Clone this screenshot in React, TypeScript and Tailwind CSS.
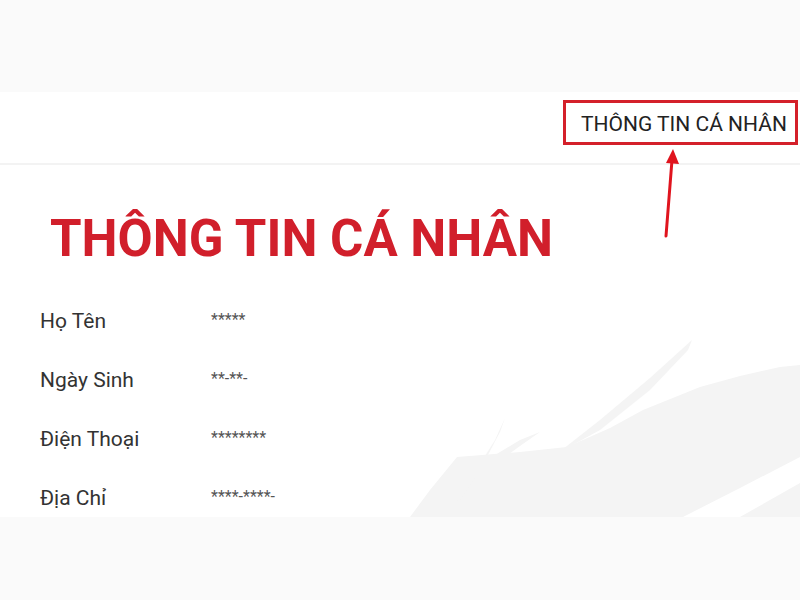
const rows = [
  { label: "Họ Tên", value: "*****" },
  { label: "Ngày Sinh", value: "**-**-" },
  { label: "Điện Thoại", value: "********" },
  { label: "Địa Chỉ", value: "****-****-" },
];

export default function App() {
  return (
    <div className="relative w-[800px] h-[600px] bg-[#fafafa] flex flex-col font-['Roboto',sans-serif]">
      <div className="h-[92px] shrink-0" />

      {/* top nav */}
      <header className="h-[73px] shrink-0 bg-white border-b-2 border-[#f3f3f3] flex justify-end items-start pt-[8px] pr-[2px]">
        <div className="w-[235px] h-[45px] border-[3px] border-[#d4202a] flex items-center pl-[15px] pt-[4px]">
          <span className="text-[21px] leading-none text-[#222]">THÔNG TIN CÁ NHÂN</span>
        </div>
      </header>

      {/* content */}
      <main className="relative h-[352px] shrink-0 bg-white overflow-hidden">
        {/* brush strokes */}
        <svg className="absolute inset-0" width="800" height="352" viewBox="0 165 800 352">
          <path
            d="M410 517 L430 490 L457 457 L520 452 L567 447 L610 428 L643 410 L700 387 L740 376 L780 367 L800 365 L800 457 L740 488 L683 517 Z"
            fill="#f4f4f4"
          />
          <path d="M740 517 L800 483 L800 517 Z" fill="#f4f4f4" />
          <path d="M558 453 L600 420 L650 378 L692 340 L688 350 L650 390 L600 430 Z" fill="#f4f4f4" />
          <path d="M452 503 L470 480 L495 440 L505 418 L500 432 L480 470 L460 500 Z" fill="#f4f4f4" />
          <path d="M440 500 L470 470 L520 440 L540 432 L520 446 L480 475 Z" fill="#f4f4f4" />
        </svg>

        <div className="relative">
          <h1 className="pl-[50px] pt-[48px] text-[51px] leading-none font-bold text-[#d11f2b]">THÔNG TIN CÁ NHÂN</h1>
          <div className="pl-[40px] pt-[45px] flex flex-col gap-[34px]">
            {rows.map((r) => (
              <div key={r.label} className="flex items-center h-[25px]">
                <span className="w-[171px] text-[21px] text-[#333]">{r.label}</span>
                <span className="text-[16px] text-[#555] -mt-[4px]">{r.value}</span>
              </div>
            ))}
          </div>
        </div>
      </main>

      {/* arrow */}
      <svg className="absolute left-[655px] top-[145px]" width="30" height="95" viewBox="655 145 30 95">
        <line x1="666" y1="236" x2="672" y2="160" stroke="#e0141e" strokeWidth="3" strokeLinecap="round" />
        <path d="M673 149 L679 164 L666 163 Z" fill="#e0141e" />
      </svg>
    </div>
  );
}
